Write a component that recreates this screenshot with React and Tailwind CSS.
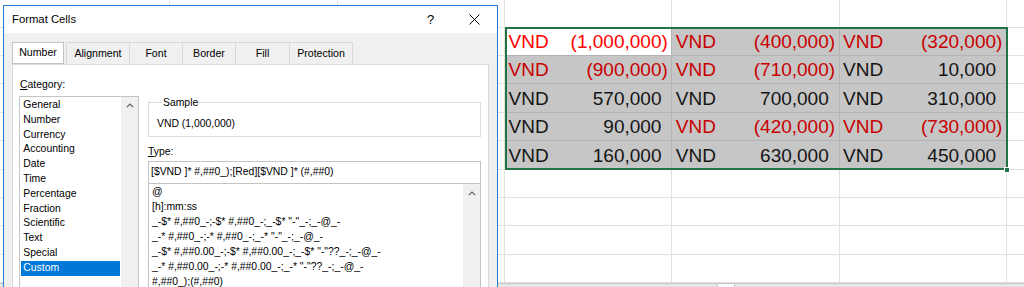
const DATA = [
  [
    { v: '(1,000,000)', red: true, active: true },
    { v: '(400,000)', red: true },
    { v: '(320,000)', red: true },
  ],
  [{ v: '(900,000)', red: true }, { v: '(710,000)', red: true }, { v: '10,000' }],
  [{ v: '570,000' }, { v: '700,000' }, { v: '310,000' }],
  [{ v: '90,000' }, { v: '(420,000)', red: true }, { v: '(730,000)', red: true }],
  [{ v: '160,000' }, { v: '630,000' }, { v: '450,000' }],
];

const CATEGORIES = [
  'General',
  'Number',
  'Currency',
  'Accounting',
  'Date',
  'Time',
  'Percentage',
  'Fraction',
  'Scientific',
  'Text',
  'Special',
  'Custom',
];

const TYPES = [
  '@',
  '[h]:mm:ss',
  '_-$* #,##0_-;-$* #,##0_-;_-$* "-"_-;_-@_-',
  '_-* #,##0_-;-* #,##0_-;_-* "-"_-;_-@_-',
  '_-$* #,##0.00_-;-$* #,##0.00_-;_-$* "-"??_-;_-@_-',
  '_-* #,##0.00_-;-* #,##0.00_-;_-* "-"??_-;_-@_-',
  '#,##0_);(#,##0)',
];

const TABS = [
  { label: 'Alignment', w: 'w-[64px] ml-[2px] border-l' },
  { label: 'Font', w: 'w-[53px]' },
  { label: 'Border', w: 'w-[53px]' },
  { label: 'Fill', w: 'w-[54px]' },
  { label: 'Protection', w: 'w-[63px]' },
];

function Chevron() {
  return (
    <svg width="8" height="5" viewBox="0 0 8 5" className="mx-auto">
      <polyline points="0.8,4.2 4,1 7.2,4.2" fill="none" stroke="#606060" strokeWidth="1.2" />
    </svg>
  );
}

function Cell({ cell, empty }) {
  if (empty) {
    return <div className="w-[167.3px] shrink-0 border-r border-b border-[#e1e1e1]" />;
  }
  const bg = cell.active ? 'bg-white' : 'bg-[#c6c6c6]';
  const color = cell.red
    ? cell.active
      ? 'text-[#ff0000]'
      : 'text-[#c80000]'
    : 'text-[#151515]';
  return (
    <div
      className={`w-[167.3px] shrink-0 border-r border-b border-[#b3b3b3] ${bg} ${color} flex items-end justify-between px-[3.5px] pb-[2px] text-[19px] leading-[22px] font-['Liberation_Sans',Arial,sans-serif]`}
    >
      <span>VND</span>
      <span>
        {cell.v}
        {!cell.red && <span className="invisible">)</span>}
      </span>
    </div>
  );
}

function Sheet() {
  const rows = [];
  for (let r = 0; r < 10; r++) {
    const data = r >= 1 && r <= 5 ? DATA[r - 1] : null;
    rows.push(
      <div key={r} className="flex h-[28.4px] shrink-0">
        <div className="w-[3.1px] shrink-0 border-b border-[#e1e1e1]" />
        <Cell empty />
        <Cell empty />
        <Cell empty />
        {data ? data.map((c, i) => <Cell key={i} cell={c} />) : [0, 1, 2].map((i) => <Cell key={i} empty />)}
        <Cell empty />
      </div>
    );
  }
  return (
    <div className="flex flex-col mt-[-0.7px] w-[1200px]">
      {rows}
      <div className="h-[6px] bg-[#e6e6e6] border-t border-[#c8c8c8] flex">
        <div className="ml-[717px] w-[18px] bg-white border-x border-[#c8c8c8]" />
      </div>
    </div>
  );
}

function Dialog() {
  return (
    <div className="absolute left-[3px] top-[5px] w-[495px] h-[300px] border border-[#2b7ad2] bg-[#f0f0f0] flex flex-col text-black font-['Liberation_Sans',Arial,sans-serif]">
      {/* Title bar */}
      <div className="h-[27px] shrink-0 bg-white flex items-center pl-[8px] pr-[13px]">
        <span className="text-[11.3px]">Format Cells</span>
        <span className="ml-auto w-[20px] text-center text-[13px] leading-none">?</span>
        <span className="ml-[23.5px] w-[20px] flex justify-center">
          <svg width="11" height="11" viewBox="0 0 11 11">
            <path d="M0.5 0.5 L10.5 10.5 M10.5 0.5 L0.5 10.5" stroke="#000" strokeWidth="1" />
          </svg>
        </span>
      </div>

      {/* Body */}
      <div className="flex-1 flex flex-col px-[8px] pt-[9px]">
        <div className="flex h-[22px] shrink-0 text-[10.6px]">
          <div className="w-[52px] bg-white border border-[#c4c4c4] flex items-center justify-center">
            Number
          </div>
          {TABS.map((t) => (
            <div
              key={t.label}
              className={`${t.w} border-t border-r border-[#d9d9d9] flex items-center justify-center`}
            >
              {t.label}
            </div>
          ))}
        </div>

        {/* Panel */}
        <div className="flex-1 bg-white border border-[#d9d9d9] pl-[6px] pt-[12.5px] text-[10.4px]">
          <div className="ml-[1px] leading-[14px]">
            <span className="underline">C</span>ategory:
          </div>
          <div className="flex items-start mt-[4px]">
            {/* Category list */}
            <div className="w-[120px] h-[220px] shrink-0 border border-[#c4c4c4] flex">
              <div className="flex-1 pt-[1.5px] px-[1px]">
                {CATEGORIES.map((c) => (
                  <div
                    key={c}
                    className={`h-[14.8px] leading-[14.8px] pl-[2.3px] ${
                      c === 'Custom' ? 'bg-[#0078d7] text-white' : ''
                    }`}
                  >
                    {c}
                  </div>
                ))}
              </div>
              <div className="w-[17px] bg-[#f0f0f0] pt-[6px]">
                <Chevron />
              </div>
            </div>

            {/* Right column */}
            <div className="ml-[9px] w-[333px] flex flex-col">
              <fieldset className="border border-[#dcdcdc] pl-[8px] pb-[4.5px] mt-[0.5px]">
                <legend className="ml-[5px] px-[1px] leading-[13px]">Sample</legend>
                <div className="pt-[8px] leading-[14px]">VND (1,000,000)</div>
              </fieldset>
              <div className="mt-[8px] leading-[14px]">
                <span className="underline">T</span>ype:
              </div>
              <div className="mt-[2.3px] h-[23px] border border-[#c4c4c4] flex items-center pl-[2px]">
                [$VND ]* #,##0_);[Red][$VND ]* (#,##0)
              </div>
              <div className="-mt-px h-[140px] border border-[#c4c4c4] flex">
                <div className="flex-1 pt-[1.4px] pl-[3px] overflow-hidden whitespace-nowrap">
                  {TYPES.map((t) => (
                    <div key={t} className="h-[14.9px] leading-[14.9px]">
                      {t}
                    </div>
                  ))}
                </div>
                <div className="w-[17px] bg-[#f0f0f0] pt-[7px]">
                  <Chevron />
                </div>
              </div>
            </div>
          </div>
        </div>
      </div>
    </div>
  );
}

export default function App() {
  return (
    <div className="relative w-[1024px] h-[287px] overflow-hidden bg-white">
      <Sheet />

      {/* Selection border and fill handle */}
      <div className="absolute left-[504.5px] top-[26.8px] w-[503px] h-[143px] border-2 border-[#217346]" />
      <div className="absolute left-[1004px] top-[166.8px] w-[6px] h-[6px] bg-[#217346] border border-white" />

      <Dialog />
    </div>
  );
}
